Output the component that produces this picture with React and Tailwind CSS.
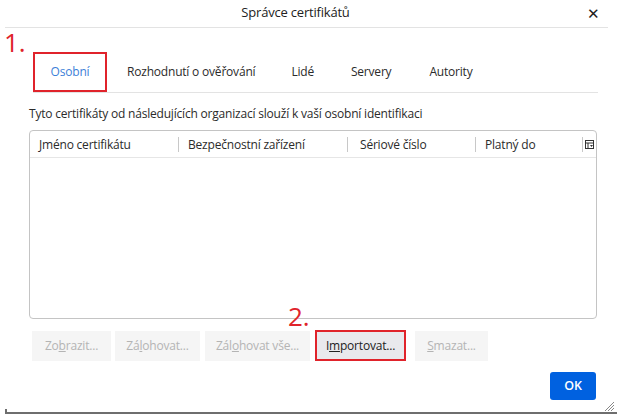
import React from "react";

const F = { fontFamily: '"Open Sans", "Noto Sans", sans-serif' };

function Btn({ w, children, active }) {
  return (
    <div
      className={`h-[30px] flex items-center justify-center text-[12px] ${
        active ? "bg-[#e9e9ed] text-[#222]" : "bg-[#f5f5f5] text-[#b4b4b4]"
      } ${w}`}
    >
      {children}
    </div>
  );
}

export default function App() {
  return (
    <div
      className="relative w-[617px] h-[418px] bg-white text-[#2b2b2b] overflow-hidden tracking-[-0.2px]"
      style={F}
    >
      {/* title bar */}
      <div className="relative mx-[5px] w-[603px] h-[28px] border-b border-[#e3e3e3] flex items-center justify-center">
        <span className="text-[13px] leading-[16px] text-[#222] pr-[22px] mb-[4px]">Správce certifikátů</span>
        <span className="absolute right-[8px] top-[2px] text-[15px] text-[#222]">✕</span>
      </div>

      {/* tabs */}
      <div className="ml-[33px] mt-[24px] w-[565px] h-[41px] border-b border-[#e3e3e3] flex items-stretch text-[12px]">
        <div className="w-[74px] h-[40px] border-2 border-[#e0232b] flex items-center justify-center text-[#3d7fd8]">
          Osobní
        </div>
        <div className="flex items-center pl-[20px] pr-[18px]">Rozhodnutí o ověřování</div>
        <div className="flex items-center px-[18px]">Lidé</div>
        <div className="flex items-center px-[19px]">Servery</div>
        <div className="flex items-center px-[19px]">Autority</div>
      </div>

      <div className="ml-[29px] mt-[13px] text-[12px] leading-[16px]">
        Tyto certifikáty od následujících organizací slouží k vaší osobní identifikaci
      </div>

      {/* table */}
      <div className="ml-[29px] mt-[8px] w-[568px] h-[189px] border border-[#c4c4c4] rounded-[4px] flex flex-col">
        <div className="h-[27px] border-b border-[#e6e6e6] flex items-center text-[12px] pt-[1px]">
          <div className="w-[148px] pl-[9px]">Jméno certifikátu</div>
          <div className="w-px h-[15px] bg-[#c8c8c8]" />
          <div className="w-[168px] pl-[9px]">Bezpečnostní zařízení</div>
          <div className="w-px h-[15px] bg-[#c8c8c8]" />
          <div className="w-[127px] pl-[12px]">Sériové číslo</div>
          <div className="w-px h-[15px] bg-[#c8c8c8]" />
          <div className="w-[106px] pl-[9px]">Platný do</div>
          <div className="w-px h-[15px] bg-[#c8c8c8]" />
          <div className="flex-1 flex justify-center">
            <svg width="9" height="9" viewBox="0 0 9 9">
              <rect x="0.5" y="0.5" width="8" height="8" fill="none" stroke="#333" />
              <line x1="0.5" y1="3" x2="8.5" y2="3" stroke="#333" />
              <line x1="3" y1="3" x2="3" y2="8.5" stroke="#333" />
              <path d="M5 5 L8 5 L6.5 7 Z" fill="#333" />
            </svg>
          </div>
        </div>
        <div className="flex-1" />
      </div>

      {/* buttons */}
      <div className="ml-[32px] mt-[11px] flex items-center">
        <Btn w="w-[79px]">
          Zo<u>b</u>razit...
        </Btn>
        <div className="w-[4px]" />
        <Btn w="w-[85px]">
          Zá<u>l</u>ohovat...
        </Btn>
        <div className="w-[5px]" />
        <Btn w="w-[105px]">
          Zál<u>o</u>hovat vše...
        </Btn>
        <div className="w-[5px]" />
        <div className="border-2 border-[#e0232b] h-[31px] w-[91px] flex">
          <div className="flex-1 bg-[#e9e9ed] flex items-center justify-center text-[12px] text-[#222]">
            I<u>m</u>portovat...
          </div>
        </div>
        <div className="w-[9px]" />
        <Btn w="w-[73px]">
          <u>S</u>mazat...
        </Btn>
      </div>

      {/* OK */}
      <div className="ml-[550px] mt-[11px] w-[46px] h-[28px] rounded-[3px] bg-[#0061e0] text-white text-[12.5px] font-semibold flex items-center justify-center">
        OK
      </div>

      {/* bottom border */}
      <div className="absolute left-[5px] right-0 bottom-[4px] h-[2px] bg-[#6e6e6e]" />
      <div className="absolute left-[5px] bottom-[5px] w-[2px] h-[4px] bg-[#6e6e6e]" />
      {/* resize grip */}
      <svg className="absolute right-[3px] bottom-[7px]" width="10" height="10" viewBox="0 0 10 10">
        <line x1="10" y1="1" x2="1" y2="10" stroke="#888" />
        <line x1="10" y1="4" x2="4" y2="10" stroke="#888" />
        <line x1="10" y1="7" x2="7" y2="10" stroke="#888" />
      </svg>

      {/* annotations */}
      <div className="absolute left-[4px] top-[27px] text-[26px] leading-[30px] text-[#e0232b]">1.</div>
      <div className="absolute left-[288px] top-[301px] text-[26px] leading-[30px] text-[#e0232b]">2.</div>
    </div>
  );
}
